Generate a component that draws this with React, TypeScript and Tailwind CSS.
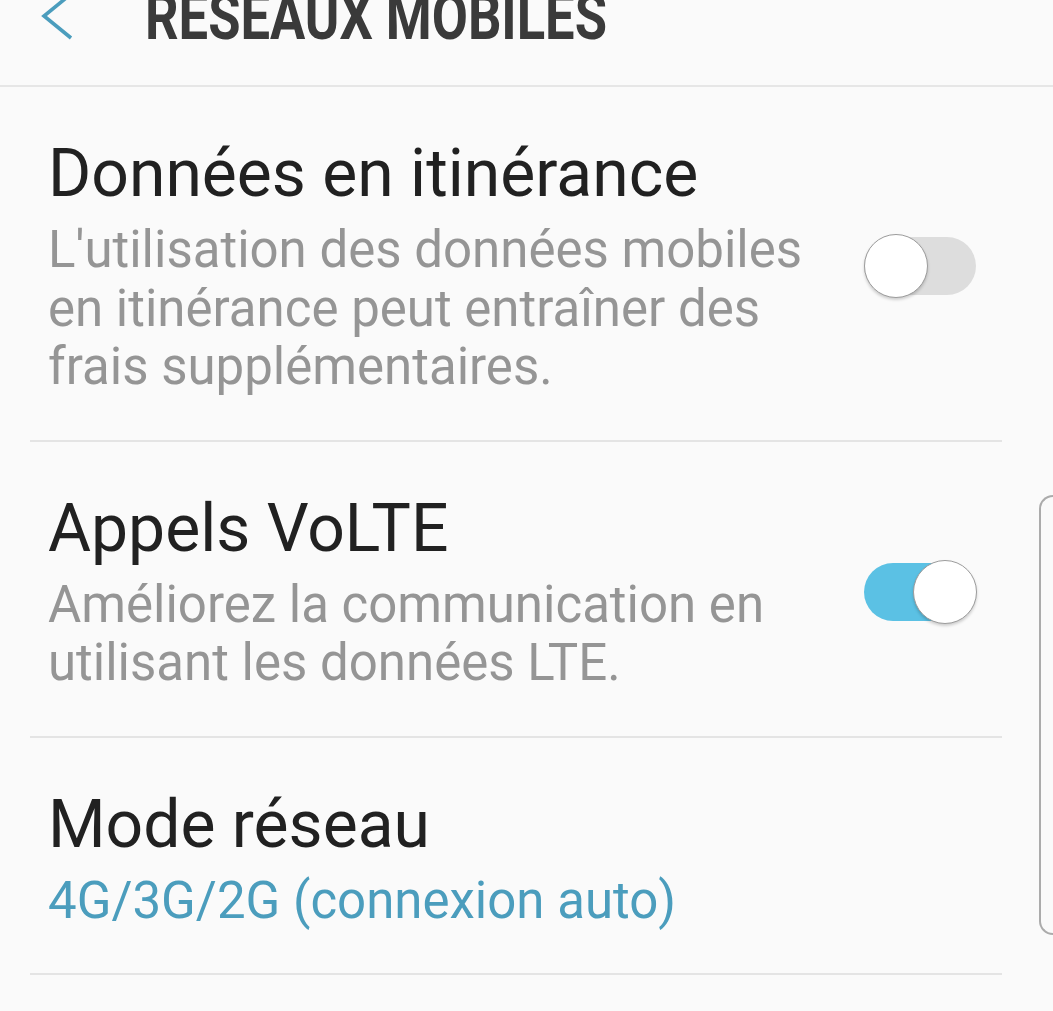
import React from 'react';

const Toggle: React.FC<{ on: boolean }> = ({ on }) => {
  return (
    <div className="relative w-[112px] h-[64px] shrink-0">
      <div
        className={
          'absolute left-0 right-0 top-[3px] h-[58px] rounded-full ' +
          (on ? 'bg-[#5bc1e4]' : 'bg-[#dddddd]')
        }
      />
      <div
        className={
          'absolute top-0 w-[64px] h-[64px] rounded-full bg-white border border-[#9c9c9c] shadow-[0_2px_3px_rgba(0,0,0,0.18)] ' +
          (on ? 'right-[-1px]' : 'left-0')
        }
      />
    </div>
  );
};

type Row = {
  title: string;
  lines: string[];
  blue?: boolean;
  toggle?: boolean;
};

const rows: Row[] = [
  {
    title: 'Données en itinérance',
    lines: ["L'utilisation des données mobiles", 'en itinérance peut entraîner des', 'frais supplémentaires.'],
    toggle: false,
  },
  {
    title: 'Appels VoLTE',
    lines: ['Améliorez la communication en', 'utilisant les données LTE.'],
    toggle: true,
  },
  {
    title: 'Mode réseau',
    lines: ['4G/3G/2G (connexion auto)'],
    blue: true,
  },
];

const App: React.FC = () => {
  return (
    <div className="relative w-[1053px] h-[1011px] overflow-hidden bg-[#fafafa] font-['Roboto',sans-serif]">
      <header className="h-[87px] flex items-start border-b-2 border-[#e6e6e6]">
        <svg className="ml-[40px] mt-[-10px] w-[36px] h-[52px]" viewBox="0 0 36 52" fill="none">
          <path d="M31 4 L4 26 L31 48" stroke="#4b9dbd" strokeWidth="3.6" strokeLinejoin="miter" />
        </svg>
        <h1 className="ml-[69px] mt-[-14px] text-[64px] leading-[64px] font-bold text-[#3a3a3a] scale-x-[0.82] origin-left whitespace-nowrap">
          RESEAUX MOBILES
        </h1>
      </header>

      <main className="px-[30px] w-[1032px]">
        {rows.map((row) => (
          <div key={row.title} className="flex items-center border-b-2 border-[#e4e4e4] pt-[49px] pb-[43px]">
            <div className="flex-1 pl-[18px]">
              <div className="text-[66px] leading-[76px] text-[#212121] whitespace-nowrap">{row.title}</div>
              <div
                className={
                  'mt-[9px] text-[51px] leading-[58.5px] whitespace-nowrap ' +
                  (row.blue ? 'text-[#4b9dbd]' : 'text-[#959595]')
                }
              >
                {row.lines.map((l) => (
                  <div key={l}>{l}</div>
                ))}
              </div>
            </div>
            {row.toggle !== undefined && (
              <div className="mr-[26px]">
                <Toggle on={row.toggle} />
              </div>
            )}
          </div>
        ))}
      </main>

      <div className="absolute right-0 top-[495px] w-[14px] h-[440px] border-2 border-r-0 border-[#ababab] rounded-l-[16px]" />
    </div>
  );
};

export default App;
